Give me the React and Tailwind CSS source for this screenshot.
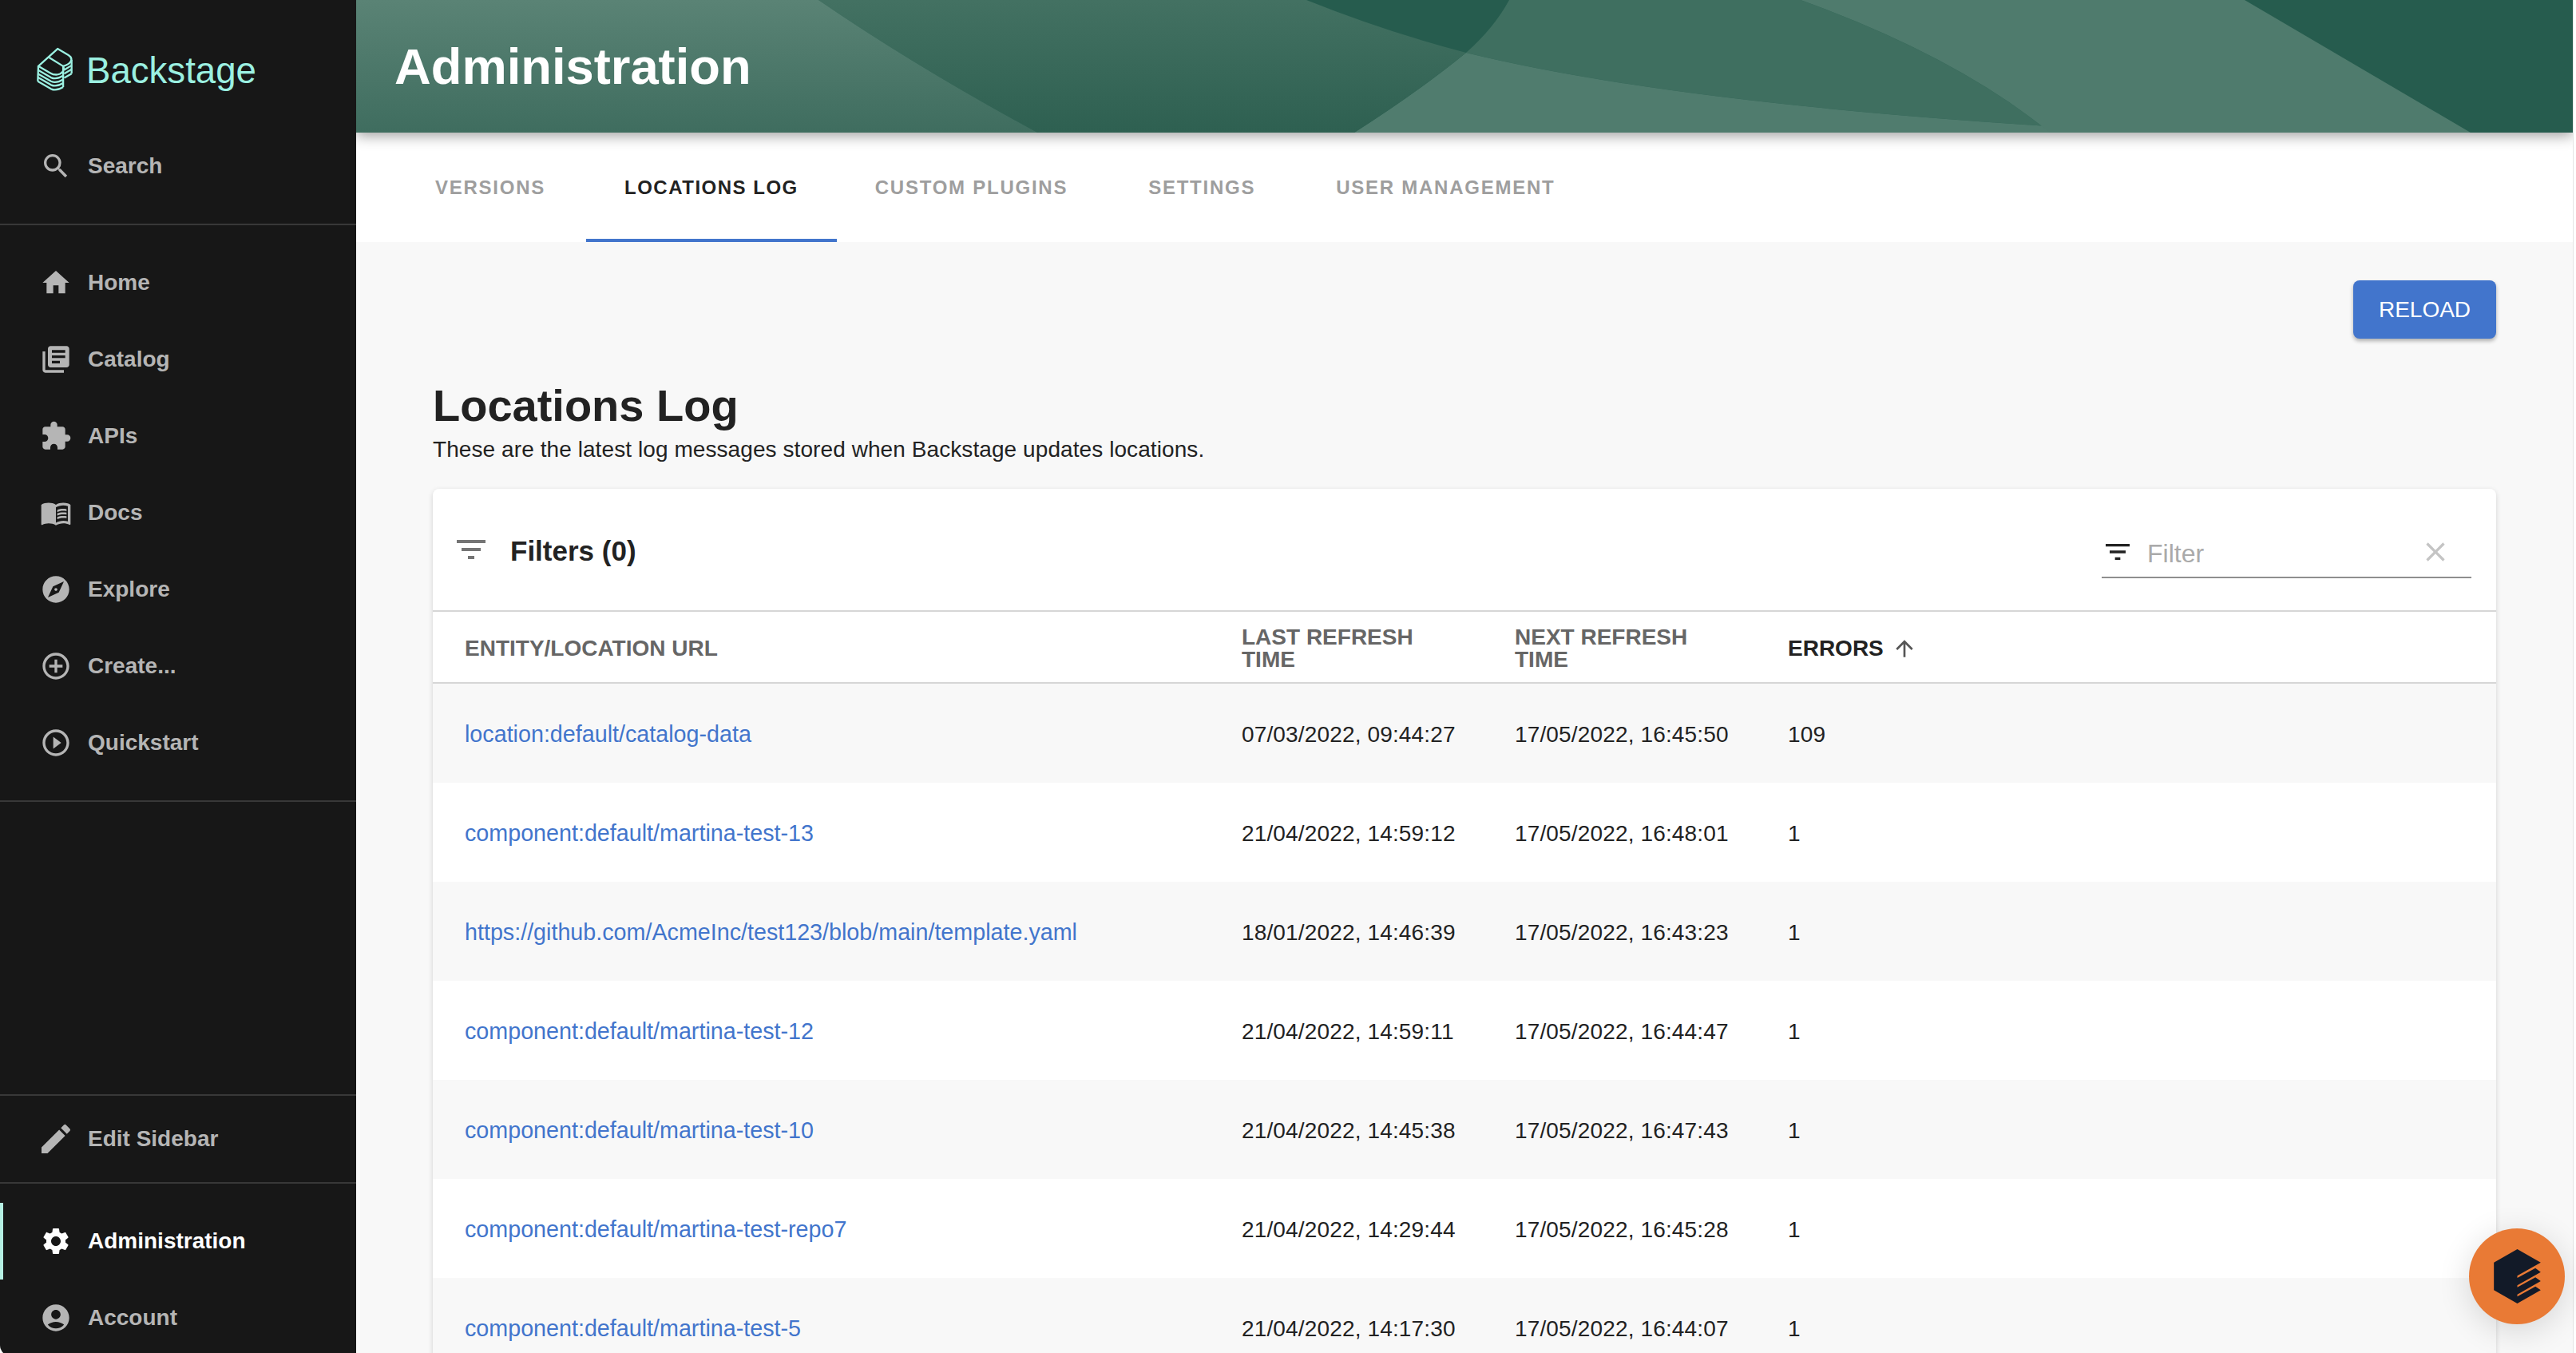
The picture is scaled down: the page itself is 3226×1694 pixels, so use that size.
import React from 'react';
import {
  MdSearch, MdHome, MdLibraryBooks, MdExtension, MdMenuBook, MdExplore, MdAddCircleOutline,
  MdPlayCircleOutline, MdEdit, MdSettings, MdAccountCircle, MdFilterList, MdClear, MdArrowUpward,
} from 'react-icons/md';

const navItems = [
  { label: 'Home', icon: MdHome },
  { label: 'Catalog', icon: MdLibraryBooks },
  { label: 'APIs', icon: MdExtension },
  { label: 'Docs', icon: MdMenuBook },
  { label: 'Explore', icon: MdExplore },
  { label: 'Create...', icon: MdAddCircleOutline },
  { label: 'Quickstart', icon: MdPlayCircleOutline },
];

const tabs = ['Versions', 'Locations Log', 'Custom Plugins', 'Settings', 'User Management'];

const rows = [
  ['location:default/catalog-data', '07/03/2022, 09:44:27', '17/05/2022, 16:45:50', '109'],
  ['component:default/martina-test-13', '21/04/2022, 14:59:12', '17/05/2022, 16:48:01', '1'],
  ['https://github.com/AcmeInc/test123/blob/main/template.yaml', '18/01/2022, 14:46:39', '17/05/2022, 16:43:23', '1'],
  ['component:default/martina-test-12', '21/04/2022, 14:59:11', '17/05/2022, 16:44:47', '1'],
  ['component:default/martina-test-10', '21/04/2022, 14:45:38', '17/05/2022, 16:47:43', '1'],
  ['component:default/martina-test-repo7', '21/04/2022, 14:29:44', '17/05/2022, 16:45:28', '1'],
  ['component:default/martina-test-5', '21/04/2022, 14:17:30', '17/05/2022, 16:44:07', '1'],
];

function Logo() {
  return (
    <svg width="45" height="57" viewBox="78 56 136 172" fill="none" stroke="#9bf0e1" strokeWidth="7" strokeLinejoin="round">
      <path d="M157 62 L198 86 Q214 96 207 110 Q200 122 178 128 Q186 146 166 157 Q148 165 128 153 L84 128 Z" />
      <path d="M125 95 L178 128" />
      <path d="M84 128 L82 185" />
      <path d="M82 142 L132 171 Q152 180 178 164" />
      <path d="M82 156 L132 185 Q152 194 178 178" />
      <path d="M82 170 L132 199 Q152 208 178 192" />
      <path d="M82 185 L132 214 Q152 223 178 207" />
      <path d="M178 128 V207" />
      <path d="M210 104 V156" />
      <path d="M182 142 L210 125" />
      <path d="M182 156 L210 140" />
      <path d="M182 172 L210 156" />
    </svg>
  );
}

function NavRow({ label, icon: Icon, active, iconClass = 'h-[40px] w-[40px]' }) {
  return (
    <div className={`relative flex h-[96px] items-center pl-[70px] text-[28px] font-bold ${active ? 'text-white' : 'text-[#b5b5b5]'}`}>
      {active && <div className="absolute left-0 top-0 h-full w-[4px] bg-[#b5f0e3]" />}
      <div className="flex w-0 flex-none items-center justify-center">
        <Icon className={`flex-none ${iconClass}`} />
      </div>
      <span className="ml-[40px]">{label}</span>
    </div>
  );
}

function Sidebar() {
  return (
    <div className="flex h-[1698px] w-[446px] flex-none flex-col rounded-bl-[14px] bg-[#171717]">
      <div className="flex h-[161px] items-start gap-[17px] pl-[46px] pt-[59px]">
        <Logo />
        <span className="text-[45.6px] leading-[60px] text-[#9bf0e1]">Backstage</span>
      </div>
      <NavRow label="Search" icon={MdSearch} />
      <div className="mt-[25px] h-[2px] bg-[#383838]" />
      <div className="pt-[24px]">
        {navItems.map((item) => (
          <NavRow key={item.label} {...item} />
        ))}
      </div>
      <div className="mt-[24px] h-[2px] bg-[#383838]" />
      <div className="h-[366px] flex-none" />
      <div className="h-[2px] bg-[#383838]" />
      <div className="py-[6px]">
        <NavRow label="Edit Sidebar" icon={MdEdit} iconClass="h-[48px] w-[48px]" />
      </div>
      <div className="h-[2px] bg-[#383838]" />
      <div className="pt-[24px]">
        <NavRow label="Administration" icon={MdSettings} active />
        <NavRow label="Account" icon={MdAccountCircle} />
      </div>
    </div>
  );
}

function HeaderWaves() {
  return (
    <svg className="absolute inset-0" width="2777" height="166" viewBox="0 0 2777 166" preserveAspectRatio="none">
      <defs>
        <linearGradient id="light" x1="0" y1="0" x2="0" y2="1">
          <stop offset="0" stopColor="#5a8375" />
          <stop offset="1" stopColor="#3f6d5f" />
        </linearGradient>
        <linearGradient id="mid" x1="0" y1="0" x2="0" y2="1">
          <stop offset="0" stopColor="#437162" />
          <stop offset="1" stopColor="#2e6051" />
        </linearGradient>
      </defs>
      <rect width="2777" height="166" fill="#265c4e" />
      <path d="M1444 0 L1809 0 Q2005 71 2121 166 L2121 158 Q1644 128 1390 66 Q1425 35 1444 0 Z" fill="#3f6f60" />
      <path d="M1390 66 Q1644 128 2121 158 L2121 166 L1250 166 Q1330 115 1390 66 Z" fill="#507c6e" />
      <path d="M1809 0 Q2005 71 2121 166 L2648 166 L2365 0 Z" fill="#4f7b6d" />
      <path d="M579 0 L1190 0 Q1290 40 1390 66 Q1330 115 1250 166 L853 166 Q700 83 579 0 Z" fill="url(#mid)" />
      <path d="M0 0 L579 0 Q700 83 853 166 L0 166 Z" fill="url(#light)" />
    </svg>
  );
}

function Tabs() {
  return (
    <div className="flex h-[137px] flex-none bg-white pl-[51px]">
      {tabs.map((tab) => (
        <div
          key={tab}
          className={`flex items-center border-y-4 border-t-transparent px-[48px] text-[24px] font-bold uppercase first:mr-[3px] ${
            tab === 'Locations Log' ? 'border-b-[#4275cc] tracking-[1.5px] text-[#222222]' : 'mr-[5px] border-b-transparent tracking-[1.75px] text-[#9e9e9e]'
          }`}
        >
          {tab}
        </div>
      ))}
    </div>
  );
}

function LogTable() {
  return (
    <div className="rounded-t-[8px] bg-white shadow-[0_2px_6px_rgba(0,0,0,0.16)]">
      <div className="flex h-[152px] items-center justify-between pl-[24px] pr-[31px]">
        <div className="flex items-center gap-[25px]">
          <MdFilterList size={48} className="text-[#757575]" />
          <span className="pt-[4px] text-[35px] font-bold text-[#222222]">Filters (0)</span>
        </div>
        <div className="mt-[8px] flex h-[64px] w-[463px] items-center border-b-2 border-[#8f8f8f]">
          <MdFilterList size={40} className="text-[#222222]" />
          <span className="ml-[17px] flex-1 pt-[4px] text-[32px] text-[#aaaaaa]">Filter</span>
          <MdClear size={40} className="mr-[25px] text-[#c4c4c4]" />
        </div>
      </div>
      <div className="grid h-[92px] grid-cols-[973px_342px_342px_1fr] items-center border-y-2 border-[#d6d6d6] pl-[40px] pt-[3px] text-[28px] font-bold leading-[28px] text-[#666666]">
        <div>ENTITY/LOCATION URL</div>
        <div>LAST REFRESH<br />TIME</div>
        <div>NEXT REFRESH<br />TIME</div>
        <div className="flex items-center gap-[10px] text-[#222222]">
          ERRORS
          <MdArrowUpward size={32} className="text-[#555555]" />
        </div>
      </div>
      {rows.map((row, i) => (
        <div
          key={row[0]}
          className={`grid h-[124px] grid-cols-[973px_342px_342px_1fr] items-center pl-[40px] pt-[4px] text-[28px] tracking-[0.15px] text-[#222222] ${
            i % 2 === 0 ? 'bg-[#f8f8f8]' : 'bg-white'
          }`}
        >
          <a className="text-[28.7px] tracking-normal text-[#4275cc]">{row[0]}</a>
          <div>{row[1]}</div>
          <div>{row[2]}</div>
          <div>{row[3]}</div>
        </div>
      ))}
    </div>
  );
}

function ChatButton() {
  return (
    <div className="absolute left-[3092px] top-[1538px] z-20 flex h-[120px] w-[120px] items-center justify-center rounded-full bg-[#e97a35] shadow-[0_8px_40px_rgba(0,0,0,0.14)]">
      <svg width="59" height="68" viewBox="516 252 176 204" fill="#121a28">
        <polygon points="604,252 692,302 604,352 604,360 672,323 692,338 604,388 604,395 672,358 692,372 604,422 604,430 672,392 692,406 604,456 516,406 516,302" />
      </svg>
    </div>
  );
}

export default function App() {
  return (
    <div className="relative flex h-[1694px] w-[3226px] overflow-hidden bg-white font-['Liberation_Sans',Arial,sans-serif]">
      <Sidebar />
      <div className="flex w-[2777px] flex-none flex-col overflow-hidden border-r border-[#e4e4e4] bg-[#f8f8f8]">
        <div className="relative z-10 h-[166px] flex-none shadow-[0_4px_16px_rgba(0,0,0,0.38)]">
          <HeaderWaves />
          <h1 className="relative pl-[48px] text-[63.3px] font-bold leading-[166px] text-white">Administration</h1>
        </div>
        <Tabs />
        <div className="pl-[96px] pr-[96px] pt-[48px]">
          <div className="flex justify-end">
            <button className="h-[73px] w-[179px] rounded-[8px] bg-[#4275cc] text-[28px] font-normal text-white shadow-[0_3px_5px_rgba(0,0,0,0.3)]">
              RELOAD
            </button>
          </div>
          <h2 className="mt-[50px] text-[56px] font-bold leading-[67px] text-[#222222]">Locations Log</h2>
          <p className="mb-[32px] mt-[5px] text-[28px] leading-[34px] tracking-[0.08px] text-[#222222]">
            These are the latest log messages stored when Backstage updates locations.
          </p>
          <LogTable />
        </div>
      </div>
      <ChatButton />
    </div>
  );
}
